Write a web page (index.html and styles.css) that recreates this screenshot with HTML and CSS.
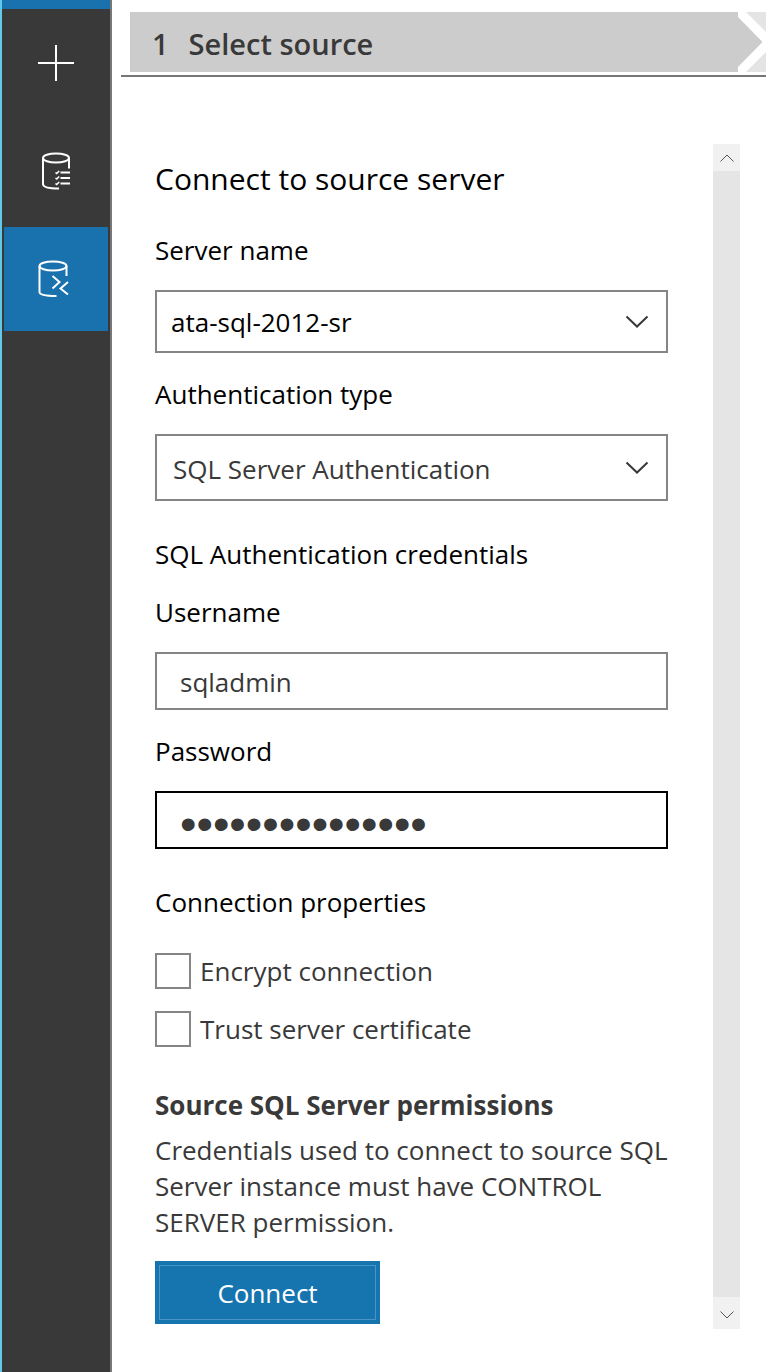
FILE: index.html
```
<!DOCTYPE html>
<html lang="en">
<head>
<meta charset="utf-8">
<title>Select source</title>
<link rel="stylesheet" href="styles.css">
</head>
<body>
<div class="app">
  <nav class="sidebar" aria-label="Main">
    <button class="nav-item" type="button" aria-label="New">
      <svg width="36" height="36" viewBox="0 0 36 36"><path d="M18 0V36M0 18H36" stroke-width="2"/></svg>
    </button>
    <button class="nav-item" type="button" aria-label="Assessments">
      <svg width="36" height="40" viewBox="0 0 36 40"><ellipse cx="18" cy="7" rx="13" ry="4.5"/><path d="M5 7V33C5 36 11 37.500 21 37.500M31 7V17.500M22.500 21.500H32M22.500 27H32M22.500 32.500H32"/><path d="M17.500 21.500l1.200 1 2.500-2.500M17.500 27l1.200 1 2.500-2.500M17.500 32.500l1.200 1 2.500-2.500" stroke-width="1.600"/></svg>
    </button>
    <button class="nav-item nav-active" type="button" aria-label="Migrations" aria-current="page">
      <svg width="36" height="40" viewBox="0 0 36 40"><ellipse cx="15" cy="7" rx="13.500" ry="4.500"/><path d="M1.500 7V33C1.500 36 8 37 18.500 37M28.500 7V17M14.500 17l7 6-7 6.500M30 23l-7.500 6.500L30 35.500"/></svg>
    </button>
  </nav>
  <main class="main">
    <header class="steps">
      <svg class="step-shape" width="48" height="60" viewBox="0 0 48 60" aria-hidden="true"><path fill="#cccccc" d="M0 0H20V5L44.500 30 20 55V60H0Z"/><path fill="#e4e4e4" d="M28 0H48V20ZM48 40V60H28Z"/></svg>
      <h1 class="step"><span class="step-number">1</span>Select source</h1>
    </header>
    <div class="panel">
      <form class="form">
        <h2 class="title">Connect to source server</h2>
        <label class="label" for="server">Server name</label>
        <div class="select-wrap">
          <select class="field select" id="server"><option>ata-sql-2012-sr</option></select>
          <svg class="chevron" width="24" height="14" viewBox="0 0 24 14"><path d="M1.500 1.500L12 11.500 22.500 1.500"/></svg>
        </div>
        <label class="label" for="auth">Authentication type</label>
        <div class="select-wrap">
          <select class="field select select-tall" id="auth"><option>SQL Server Authentication</option></select>
          <svg class="chevron" width="24" height="14" viewBox="0 0 24 14"><path d="M1.500 1.500L12 11.500 22.500 1.500"/></svg>
        </div>
        <h3 class="section">SQL Authentication credentials</h3>
        <label class="label" for="user">Username</label>
        <input class="field" id="user" type="text" value="sqladmin">
        <label class="label" for="password">Password</label>
        <input class="field field-focus" id="password" type="password" value="password1234567">
        <h3 class="section">Connection properties</h3>
        <label class="check"><input class="box" type="checkbox">Encrypt connection</label>
        <label class="check"><input class="box" type="checkbox">Trust server certificate</label>
        <h3 class="note-title">Source SQL Server permissions</h3>
        <p class="note">Credentials used to connect to source SQL Server instance must have CONTROL SERVER permission.</p>
        <button class="connect" type="button">Connect</button>
      </form>
      <div class="scrollbar">
        <button class="scroll-button" type="button" aria-label="Scroll up"><svg width="14" height="8" viewBox="0 0 14 8"><path d="M.5 7.500L7 1l6.500 6.500"/></svg></button>
        <button class="scroll-button scroll-down" type="button" aria-label="Scroll down"><svg width="14" height="8" viewBox="0 0 14 8"><path d="M.5.5L7 7 13.500.5"/></svg></button>
      </div>
    </div>
  </main>
</div>
</body>
</html>
```
FILE: styles.css
```
* { box-sizing: border-box; }
body {
  margin: 0;
  background: #ffffff;
  color: #000000;
  font: 26px/36px "Open Sans", "Noto Sans", sans-serif;
}
button, input, select { font: inherit; margin: 0; border-radius: 0; }
h1, h2, h3, p { margin: 0; font-weight: 400; }
svg { display: block; fill: none; stroke: currentColor; stroke-width: 2; }
.app { display: flex; min-height: 100vh; }
.sidebar {
  flex: 0 0 112px;
  display: flex;
  flex-direction: column;
  gap: 4px;
  border-left: 2px solid #62c9ea;
  border-right: 2px solid #777777;
  background: linear-gradient(#1971ae 9px, #393939 9px);
  padding: 11px 2px 0;
}
.nav-item {
  display: flex;
  align-items: center;
  justify-content: center;
  height: 104px;
  padding: 0;
  border: 0;
  background: none;
  color: #ffffff;
}
.nav-active { background: #1971ae; }
.main { flex: 1; min-width: 0; padding-left: 9px; }
.steps {
  display: flex;
  flex-direction: row-reverse;
  padding: 12px 0 3px 9px;
  border-bottom: 2px solid #767676;
}
.step-shape { flex: none; stroke: none; }
.step {
  flex: 1;
  display: flex;
  align-items: center;
  gap: 20px;
  height: 60px;
  padding: 4px 0 0 22px;
  background: #cccccc;
  color: #393939;
  font-size: 29px;
  font-weight: 600;
}
.panel {
  display: flex;
  justify-content: space-between;
  margin: 67px 26px 0 34px;
}
.form {
  flex: 1;
  display: flex;
  flex-direction: column;
  margin-right: 45px;
  padding: 15px 0 5px;
}
.title { font-size: 30px; line-height: 40px; margin-bottom: 33px; }
.label { margin-bottom: 22px; }
.field {
  display: block;
  width: 100%;
  height: 58px;
  margin-bottom: 23px;
  padding: 2px 23px 0;
  border: 2px solid #858585;
  background: #ffffff;
  color: #393939;
  outline: 0;
}
.select-wrap { display: grid; align-items: center; margin-bottom: 23px; }
.select-wrap > * { grid-area: 1 / 1; }
.select {
  appearance: none;
  height: 63px;
  margin: 0;
  padding: 0 14px;
  color: #000000;
}
.select-tall { height: 67px; padding: 2px 16px 0; color: #393939; }
.chevron { justify-self: end; margin-right: 19px; color: #393939; pointer-events: none; }
.section { font-size: 26px; margin: 12px 0 22px; }
.field-focus {
  padding-top: 6px;
  border-color: #000000;
  font-family: "Liberation Sans", sans-serif;
  font-size: 47px;
}
.check {
  display: flex;
  align-items: center;
  gap: 9px;
  height: 36px;
  margin: 11px 0;
  color: #393939;
}
.box { appearance: none; width: 36px; height: 36px; border: 2px solid #858585; background: #ffffff; }
.note-title { margin: 29px 0 9px; color: #393939; font-size: 26px; font-weight: 700; }
.note { margin-bottom: 21px; color: #393939; }
.connect {
  width: 225px;
  height: 63px;
  padding: 0;
  border: 0;
  background: #1674ae;
  color: #ffffff;
  outline: 1px solid #4795c4;
  outline-offset: -5px;
}
.scrollbar {
  flex: 0 0 27px;
  display: flex;
  flex-direction: column;
  justify-content: space-between;
  background: #e5e5e5;
}
.scroll-button {
  display: flex;
  align-items: center;
  justify-content: center;
  height: 27px;
  padding: 0;
  border: 0;
  background: #f1f1f1;
  color: #555555;
}
.scroll-down { height: 32px; padding-top: 4px; }
.scroll-button svg { stroke-width: 1; }
```
